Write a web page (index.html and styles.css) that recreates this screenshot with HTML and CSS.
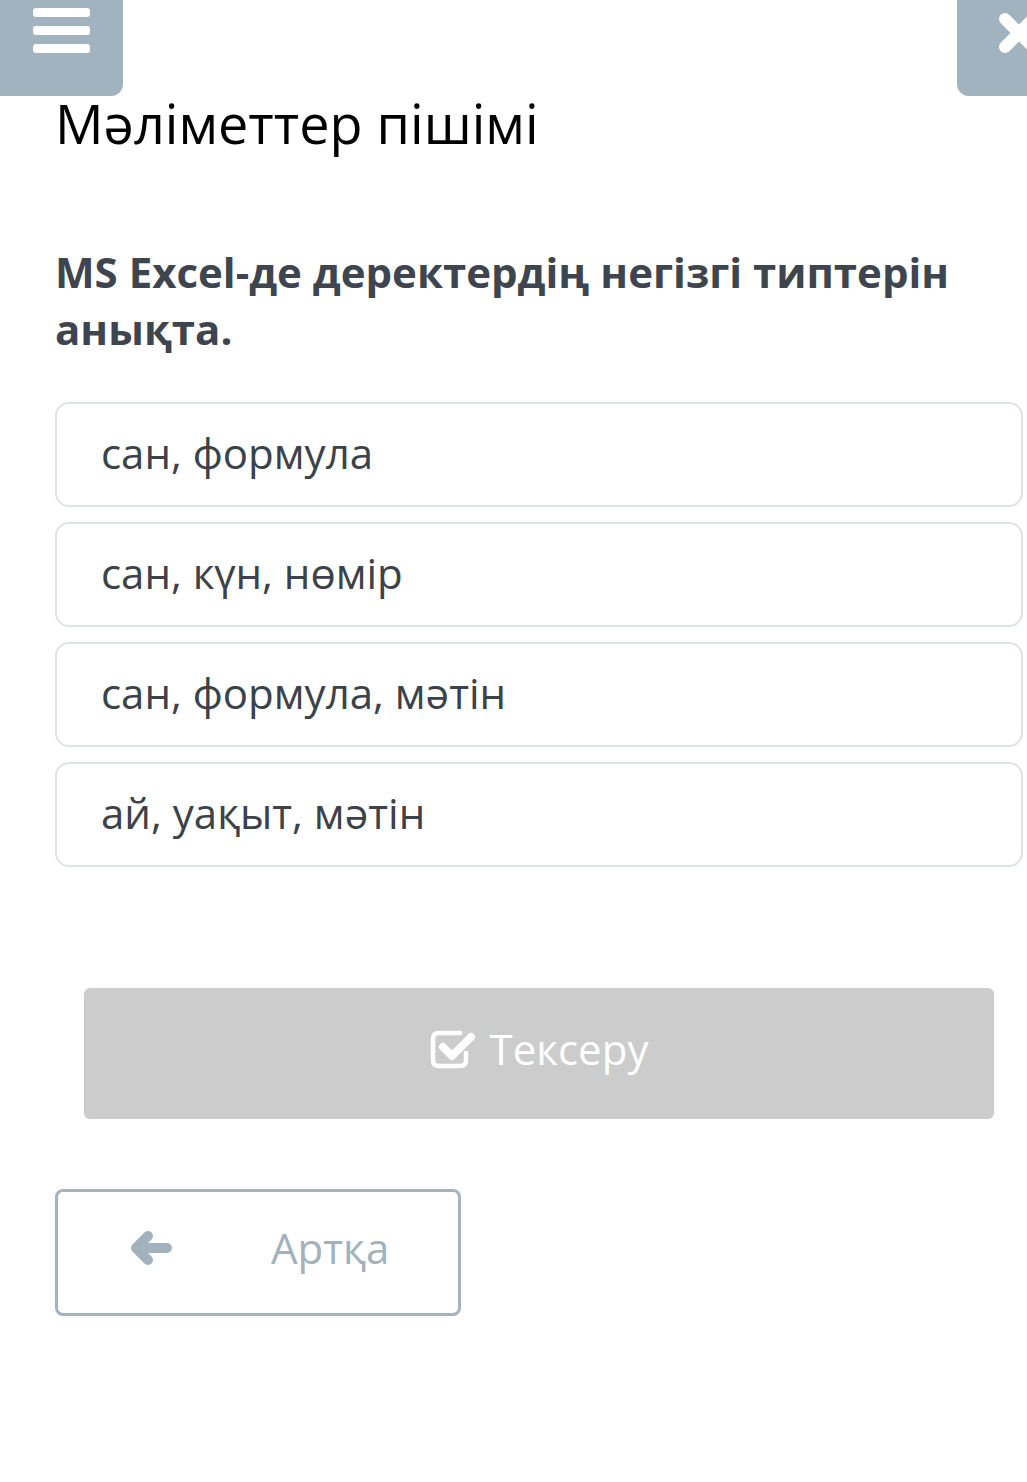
FILE: index.html
```html
<!DOCTYPE html>
<html lang="kk">
<head>
    <meta charset="UTF-8">
    <meta name="viewport" content="width=device-width, initial-scale=1.0">
    <title>Мәліметтер пішімі</title>
    <link rel="stylesheet" href="styles.css">
</head>
<body>
    <button class="corner menu-btn" aria-label="Мәзір">
        <span class="bar"></span>
        <span class="bar"></span>
        <span class="bar"></span>
    </button>
    <button class="corner close-btn" aria-label="Жабу">
        <svg width="44" height="44" viewBox="0 0 44 44">
            <path d="M8 8 L36 36 M36 8 L8 36" stroke="#fff" stroke-width="12" stroke-linecap="round"/>
        </svg>
    </button>

    <div class="container">
        <h1 class="title">Мәліметтер пішімі</h1>
        <p class="question">MS Excel-де деректердің негізгі типтерін анықта.</p>

        <div class="options">
            <div class="option">сан, формула</div>
            <div class="option">сан, күн, нөмір</div>
            <div class="option">сан, формула, мәтін</div>
            <div class="option">ай, уақыт, мәтін</div>
        </div>

        <button class="check-btn" disabled>
            <svg width="46" height="40" viewBox="0 0 46 40">
                <path d="M30 4 H9 Q3 4 3 10 V31 Q3 37 9 37 H30 Q36 37 36 31 V24" fill="none" stroke="#fff" stroke-width="4.5" stroke-linecap="round"/>
                <path d="M13 18 L22 27 L41 8" fill="none" stroke="#fff" stroke-width="8" stroke-linecap="round" stroke-linejoin="round"/>
            </svg>
            <span>Тексеру</span>
        </button>

        <button class="back-btn">
            <svg width="44" height="34" viewBox="0 0 44 34">
                <path d="M8 17 H38 M19 5 L7 17 L19 29" fill="none" stroke="#a2b2bd" stroke-width="10" stroke-linecap="round" stroke-linejoin="round"/>
            </svg>
            <span>Артқа</span>
        </button>
    </div>
</body>
</html>
```

FILE: styles.css
```css
body {
    font-family: "Open Sans", "Noto Sans", sans-serif;
    margin: 0;
    background-color: #ffffff;
    overflow-x: hidden;
    position: relative;
    min-height: 1482px;
}
.corner {
    position: absolute;
    top: 0;
    width: 123px;
    height: 96px;
    border: none;
    background-color: #a0b3bf;
    padding: 0;
    cursor: pointer;
}
.menu-btn {
    left: 0;
    border-bottom-right-radius: 12px;
    display: flex;
    flex-direction: column;
    align-items: center;
    gap: 9px;
    padding-top: 8px;
}
.bar {
    display: block;
    width: 57px;
    height: 9px;
    border-radius: 3px;
    background-color: #ffffff;
}
.close-btn {
    left: 957px;
    border-bottom-left-radius: 12px;
    display: flex;
    justify-content: center;
    align-items: flex-start;
    padding-top: 11px;
}
.container {
    width: 968px;
    padding: 85px 0 0 55px;
}
.title {
    margin: 0;
    font-size: 54px;
    font-weight: 400;
    line-height: 76px;
    color: #000000;
}
.question {
    margin: 82px 0 0;
    font-size: 42px;
    font-weight: 700;
    line-height: 57px;
    color: #3e454e;
}
.options {
    margin-top: 45px;
    display: flex;
    flex-direction: column;
    gap: 15px;
}
.option {
    height: 101px;
    display: flex;
    align-items: center;
    padding: 0 0 4px 44px;
    box-sizing: border-box;
    height: 105px;
    border: 2px solid #e0e3e5;
    border-radius: 14px;
    font-size: 42px;
    color: #3b4249;
}
.check-btn {
    margin: 121px 29px 0;
    width: 910px;
    height: 131px;
    display: flex;
    justify-content: center;
    align-items: center;
    gap: 14px;
    border: none;
    border-radius: 6px;
    background-color: #cccccc;
    color: #ffffff;
    font-family: inherit;
    font-size: 42px;
    padding: 0 0 10px;
}
.back-btn {
    margin-top: 70px;
    width: 406px;
    height: 127px;
    display: flex;
    align-items: center;
    padding: 0 0 10px 71px;
    border: 3px solid #a5b3bc;
    border-radius: 8px;
    background-color: #ffffff;
    color: #a2b1bb;
    font-family: inherit;
    font-size: 42px;
    cursor: pointer;
}
.back-btn span {
    margin-left: 98px;
}
```
